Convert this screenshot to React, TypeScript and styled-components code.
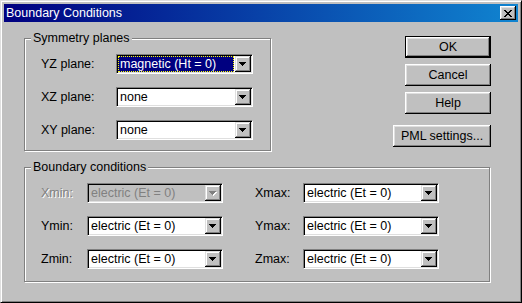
import React from 'react';
import styled, { createGlobalStyle, css } from 'styled-components';

const GlobalStyle = createGlobalStyle`
  html, body {
    margin: 0;
    padding: 0;
    background: #c0c0c0;
  }
  body {
    font-family: "Liberation Sans", Arial, sans-serif;
    font-size: 12.5px;
    color: #000;
  }
`;

const raisedBevel = css`
  box-shadow:
    inset -1px -1px 0 #000,
    inset 1px 1px 0 #fff,
    inset -2px -2px 0 #808080,
    inset 2px 2px 0 #dfdfdf;
`;

const Window = styled.div`
  width: 522px;
  height: 303px;
  box-sizing: border-box;
  background: #c0c0c0;
  border: 1px solid;
  border-color: #dfdfdf #000 #000 #dfdfdf;
  box-shadow: inset 1px 1px 0 #fff, inset -1px -1px 0 #808080;
  padding: 3px;
  display: flex;
  flex-direction: column;
`;

const TitleBar = styled.div`
  height: 18px;
  flex-shrink: 0;
  display: flex;
  align-items: center;
  justify-content: space-between;
  padding: 0 2px;
  background: linear-gradient(90deg, #000080, #1084d0);
  color: #fff;
`;

const TitleText = styled.span`
  font-size: 12.5px;
  line-height: 18px;
  white-space: nowrap;
`;

const CloseButton = styled.button`
  width: 16px;
  height: 14px;
  padding: 0;
  border: none;
  background: #c0c0c0;
  display: flex;
  align-items: center;
  justify-content: center;
  ${raisedBevel}
`;

const Body = styled.div`
  flex: 1;
  display: flex;
  flex-direction: column;
  padding: 16px 27px 0 20px;
`;

const TopRow = styled.div`
  display: flex;
  justify-content: space-between;
  align-items: flex-start;
`;

const GroupBox = styled.div<{ $width: number; $height: number }>`
  position: relative;
  box-sizing: border-box;
  width: ${p => p.$width}px;
  height: ${p => p.$height}px;
  border: 1px solid #808080;
  box-shadow: inset 1px 1px 0 #fff, 1px 1px 0 #fff;
  padding: 15px 0 0 16px;
  display: flex;
  flex-direction: column;
  gap: 13px;
`;

const BoundaryBox = styled(GroupBox)`
  margin-top: 16px;
`;

const Legend = styled.span`
  position: absolute;
  top: -8px;
  left: 6px;
  padding: 0 2px;
  line-height: 14px;
  background: #c0c0c0;
  white-space: nowrap;
`;

const Row = styled.div`
  display: flex;
  gap: 32px;
`;

const Field = styled.div`
  display: flex;
  align-items: center;
  height: 20px;
`;

const FieldLabel = styled.span<{ $width: number; $disabled?: boolean }>`
  width: ${p => p.$width}px;
  white-space: nowrap;
  color: ${p => (p.$disabled ? '#808080' : '#000')};
  text-shadow: ${p => (p.$disabled ? '1px 1px 0 #fff' : 'none')};
`;

const Combo = styled.div<{ $width: number; $disabled?: boolean }>`
  width: ${p => p.$width}px;
  height: 20px;
  box-sizing: border-box;
  display: flex;
  padding: 1px;
  background: ${p => (p.$disabled ? '#c0c0c0' : '#fff')};
  border: 1px solid;
  border-color: #808080 #fff #fff #808080;
  box-shadow: inset 1px 1px 0 #000, inset -1px -1px 0 #dfdfdf;
`;

const ComboValue = styled.div<{ $selected?: boolean; $disabled?: boolean }>`
  flex: 1;
  min-width: 0;
  padding-left: 2px;
  line-height: 16px;
  white-space: nowrap;
  overflow: hidden;
  color: ${p => (p.$disabled ? '#808080' : '#000')};
  ${p =>
    p.$selected &&
    css`
      margin-right: 1px;
      background: #000080;
      color: #fff;
      outline: 1px dotted #ffff00;
      outline-offset: -1px;
    `}
`;

const DropButton = styled.div`
  width: 16px;
  height: 16px;
  flex-shrink: 0;
  background: #c0c0c0;
  display: flex;
  align-items: center;
  justify-content: center;
  box-shadow:
    inset -1px -1px 0 #000,
    inset 1px 1px 0 #dfdfdf,
    inset -2px -2px 0 #808080,
    inset 2px 2px 0 #fff;
`;

const ButtonColumn = styled.div`
  display: flex;
  flex-direction: column;
  align-items: flex-end;
  gap: 6px;
  margin-top: -2px;
`;

const PushButton = styled.button<{ $width: number; $isDefault?: boolean; $gapAbove?: number }>`
  width: ${p => p.$width}px;
  height: 22px;
  box-sizing: border-box;
  padding: 0;
  margin-top: ${p => p.$gapAbove ?? 0}px;
  font-family: inherit;
  font-size: 12.5px;
  color: #000;
  background: #c0c0c0;
  border: ${p => (p.$isDefault ? '1px solid #000' : 'none')};
  ${raisedBevel}
`;

const arrowPath = 'M0 0h7v1h-1v1h-1v1h-1v1h-1v-1h-1v-1h-1v-1h-1z';

const Arrow: React.FC<{ disabled?: boolean }> = ({ disabled }) => (
  <svg width="8" height="5" viewBox="0 0 8 5" shapeRendering="crispEdges">
    {disabled && <path d={arrowPath} fill="#fff" transform="translate(1 1)" />}
    <path d={arrowPath} fill={disabled ? '#808080' : '#000'} />
  </svg>
);

const CloseGlyph = () => (
  <svg width="8" height="7" viewBox="0 0 8 7" shapeRendering="crispEdges">
    <path
      d="M0 0h2v1h1v1h2v-1h1v-1h2v1h-1v1h-1v1h-1v1h1v1h1v1h1v1h-2v-1h-1v-1h-2v1h-1v1h-2v-1h1v-1h1v-1h1v-1h-1v-1h-1v-1h-1z"
      fill="#000"
    />
  </svg>
);

interface ComboFieldProps {
  label: string;
  value: string;
  labelWidth: number;
  comboWidth: number;
  selected?: boolean;
  disabled?: boolean;
}

const ComboField: React.FC<ComboFieldProps> = ({ label, value, labelWidth, comboWidth, selected, disabled }) => (
  <Field>
    <FieldLabel $width={labelWidth} $disabled={disabled}>{label}</FieldLabel>
    <Combo $width={comboWidth} $disabled={disabled}>
      <ComboValue $selected={selected} $disabled={disabled}>{value}</ComboValue>
      <DropButton>
        <Arrow disabled={disabled} />
      </DropButton>
    </Combo>
  </Field>
);

const ELECTRIC = 'electric (Et = 0)';

export default function App() {
  return (
    <>
      <GlobalStyle />
      <Window>
        <TitleBar>
          <TitleText>Boundary Conditions</TitleText>
          <CloseButton title="Close">
            <CloseGlyph />
          </CloseButton>
        </TitleBar>
        <Body>
          <TopRow>
            <GroupBox $width={247} $height={113}>
              <Legend>Symmetry planes</Legend>
              <ComboField label="YZ plane:" value="magnetic (Ht = 0)" labelWidth={75} comboWidth={137} selected />
              <ComboField label="XZ plane:" value="none" labelWidth={75} comboWidth={137} />
              <ComboField label="XY plane:" value="none" labelWidth={75} comboWidth={137} />
            </GroupBox>
            <ButtonColumn>
              <PushButton $width={86} $isDefault>OK</PushButton>
              <PushButton $width={86}>Cancel</PushButton>
              <PushButton $width={86}>Help</PushButton>
              <PushButton $width={98} $gapAbove={5}>PML settings...</PushButton>
            </ButtonColumn>
          </TopRow>
          <BoundaryBox $width={466} $height={115}>
            <Legend>Boundary conditions</Legend>
            <Row>
              <ComboField label="Xmin:" value={ELECTRIC} labelWidth={46} comboWidth={136} disabled />
              <ComboField label="Xmax:" value={ELECTRIC} labelWidth={48} comboWidth={136} />
            </Row>
            <Row>
              <ComboField label="Ymin:" value={ELECTRIC} labelWidth={46} comboWidth={136} />
              <ComboField label="Ymax:" value={ELECTRIC} labelWidth={48} comboWidth={136} />
            </Row>
            <Row>
              <ComboField label="Zmin:" value={ELECTRIC} labelWidth={46} comboWidth={136} />
              <ComboField label="Zmax:" value={ELECTRIC} labelWidth={48} comboWidth={136} />
            </Row>
          </BoundaryBox>
        </Body>
      </Window>
    </>
  );
}
